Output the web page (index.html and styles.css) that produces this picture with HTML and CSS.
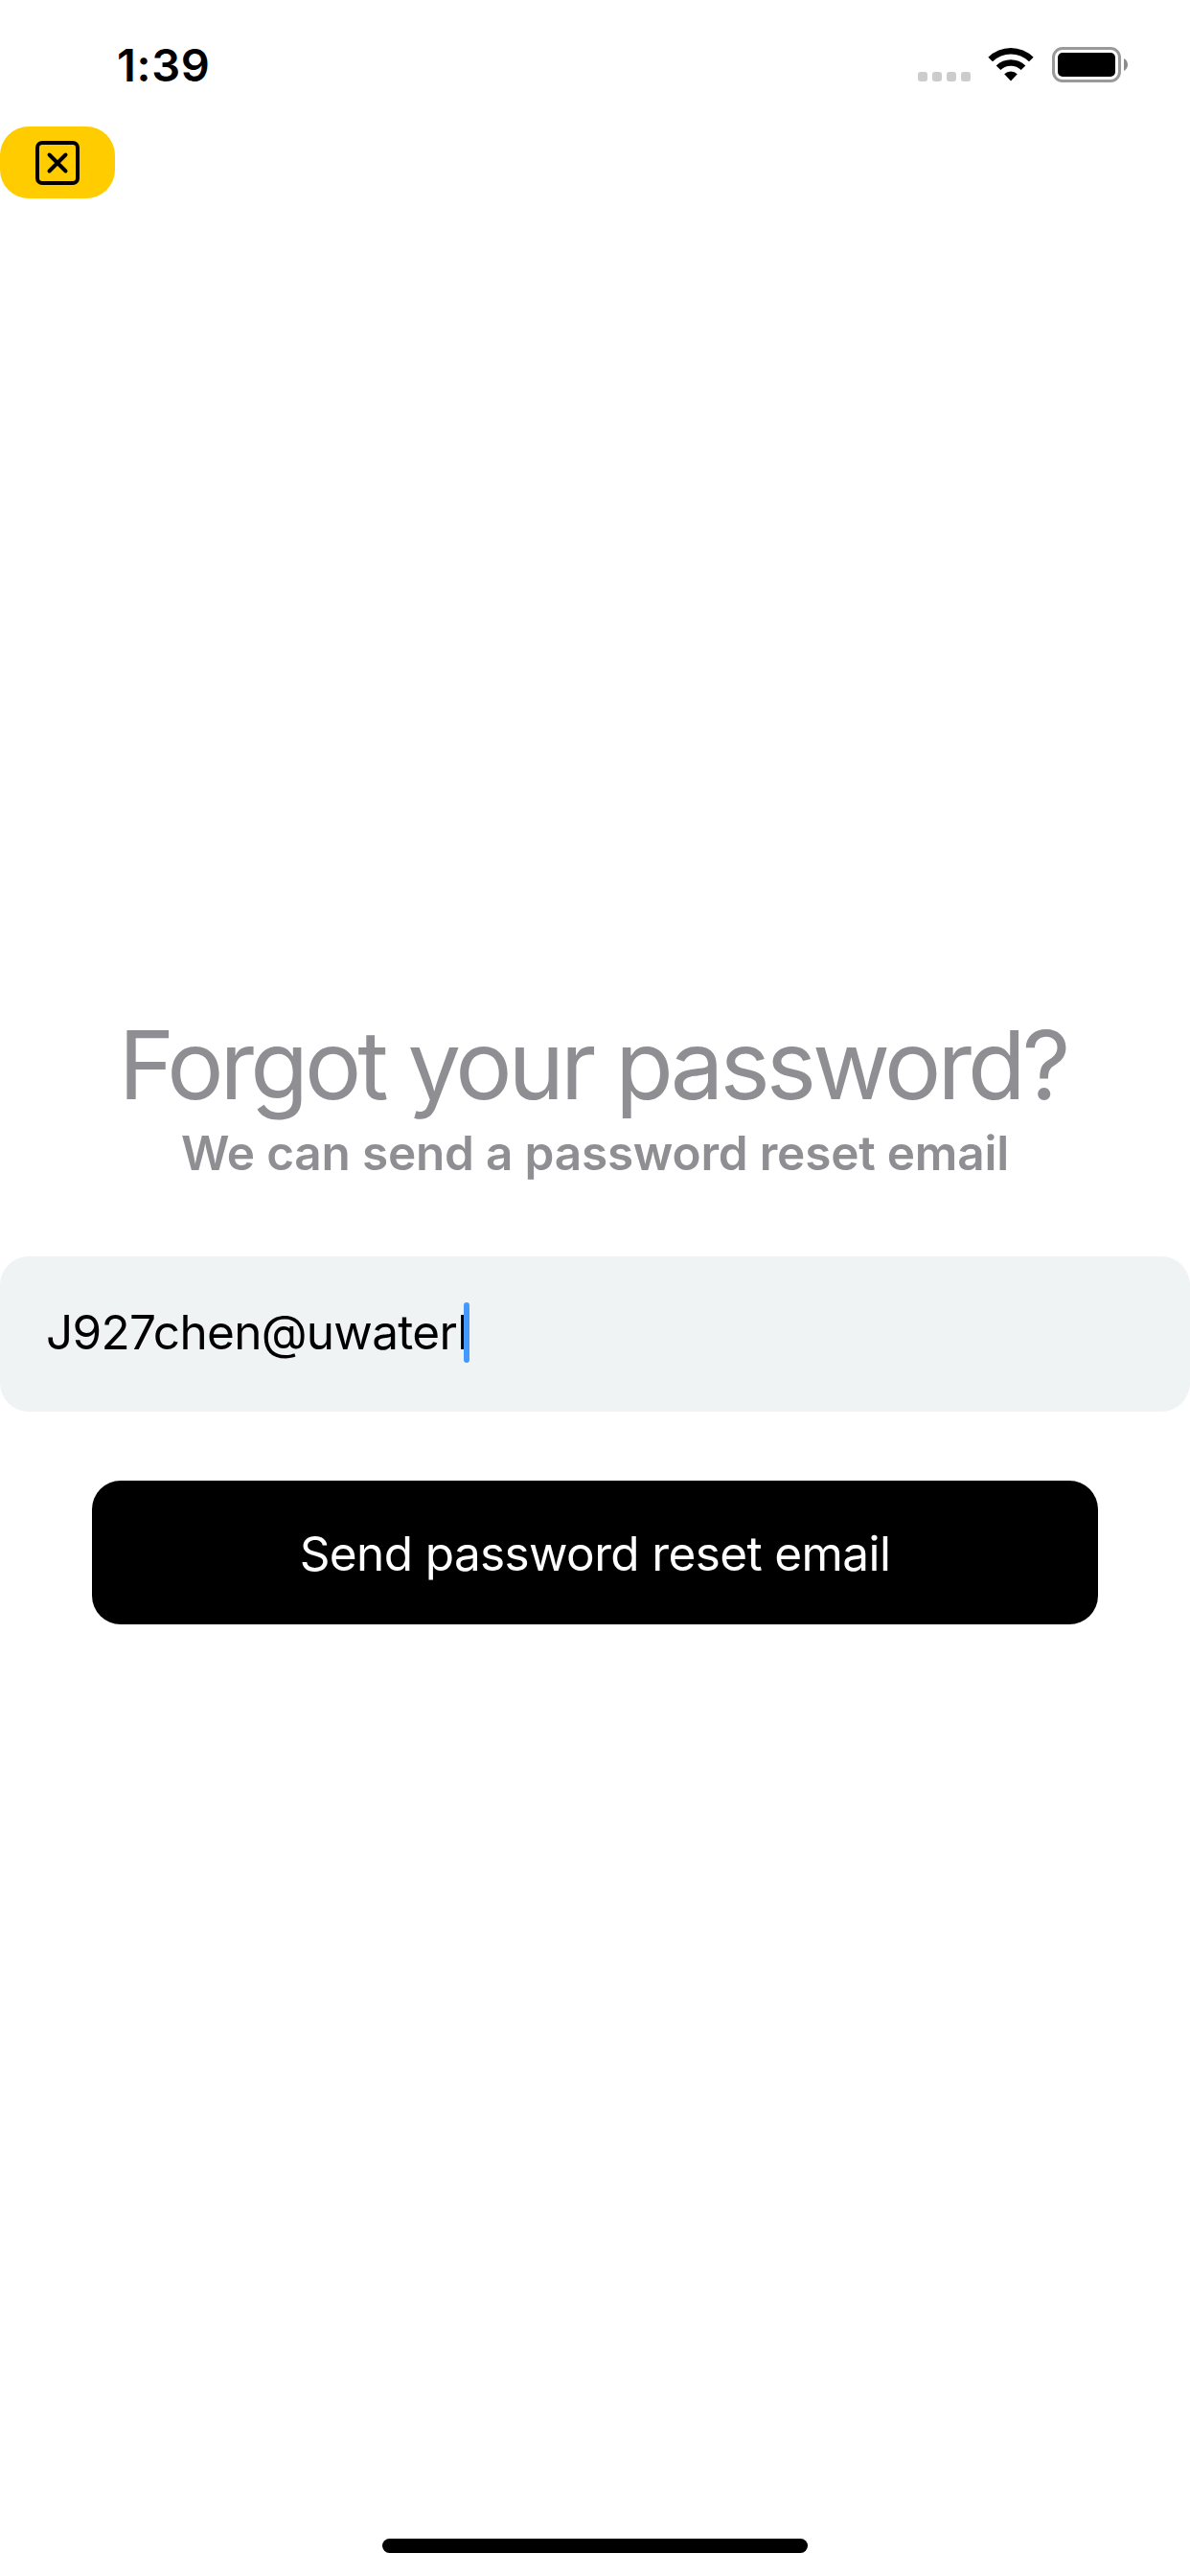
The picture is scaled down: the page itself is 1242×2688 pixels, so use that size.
FILE: index.html
```html
<!DOCTYPE html>
<html lang="en">
<head>
<meta charset="utf-8">
<title>Reset password</title>
<link rel="stylesheet" href="styles.css">
</head>
<body>
<div class="screen">
  <header class="status">
    <span class="time">1:39</span>
    <div class="indicators">
      <span class="signal"><i></i><i></i><i></i><i></i></span>
      <svg class="wifi" width="48" height="37" viewBox="0 0 48 37">
        <path d="M0.4 10.8A33.4 33.4 0 0 1 47.6 10.8L43 15.3A27 27 0 0 0 5 15.3Z"/>
        <path d="M8.7 19.4A22 22 0 0 1 39.3 19.4L34.7 24A15.5 15.5 0 0 0 13.3 24Z"/>
        <path d="M17.2 28.2A10 10 0 0 1 30.8 28.2L24 35.6Z"/>
      </svg>
      <svg class="battery" width="80" height="37" viewBox="0 0 80 37">
        <rect x="1.5" y="1.5" width="69" height="34" rx="9.5" fill="none" stroke="#999" stroke-width="3"/>
        <rect x="6" y="6" width="60" height="25" rx="5"/>
        <path d="M75 12C80.300 14.500 80.300 22.500 75 25Z" fill="#8c8c8c"/>
      </svg>
    </div>
  </header>
  <button class="close" aria-label="Close">
    <svg width="46" height="46" viewBox="0 0 46 46" fill="none" stroke="#000" stroke-width="4">
      <rect x="2" y="2" width="42" height="42" rx="5"/>
      <path d="M14.500 14.500 31.500 31.500M31.500 14.500 14.500 31.500" stroke-linecap="round"/>
    </svg>
  </button>
  <main class="content">
    <h1 class="title">Forgot your password?</h1>
    <p class="subtitle">We can send a password reset email</p>
    <div class="field"><span class="value">J927chen@uwaterl<i class="caret"></i></span></div>
    <button class="send">Send password reset email</button>
  </main>
  <div class="home"></div>
</div>
</body>
</html>
```
FILE: styles.css
```css
* { box-sizing: border-box; }
body {
  margin: 0;
  background: #fff;
  color: #000;
  font-family: Inter, "Liberation Sans", sans-serif;
}
button { border: 0; padding: 0; font: inherit; }
.screen { height: 2688px; display: flex; flex-direction: column; align-items: center; }
.status { width: 100%; height: 132px; padding: 0 64px 0 122px; display: flex; justify-content: space-between; }
.time { font-size: 47px; font-weight: 600; line-height: 60px; padding-top: 38px; letter-spacing: 0.7px; }
.indicators { display: flex; align-items: flex-start; padding-top: 49px; }
.signal { display: flex; gap: 5px; margin: 26px 18px 0 0; }
.signal i { width: 10px; height: 10px; border-radius: 3px; background: #ccc; }
.wifi { margin-right: 19px; }
.close {
  align-self: flex-start;
  width: 120px;
  height: 75px;
  display: flex;
  align-items: center;
  justify-content: center;
  border-radius: 30px;
  background: #fc0;
}
.content { width: 100%; flex: 1; padding-top: 843px; text-align: center; }
.title {
  margin: 0;
  padding-right: 5px;
  font-size: 99px;
  font-weight: 400;
  line-height: 122px;
  letter-spacing: -4px;
  color: #8e8e93;
  white-space: nowrap;
}
.subtitle {
  margin: 0;
  padding-top: 1px;
  font-size: 49.5px;
  font-weight: 600;
  line-height: 61px;
  letter-spacing: -0.2px;
  color: #8e8e93;
  white-space: nowrap;
}
.field {
  height: 162px;
  margin-top: 77px;
  padding: 0 48px 4px;
  display: flex;
  align-items: center;
  border-radius: 30px;
  background: #eff3f4;
  font-size: 49.5px;
  letter-spacing: -0.7px;
}
.value { position: relative; }
.caret { position: absolute; left: 436px; top: -1px; width: 6px; height: 63px; border-radius: 3px; background: #49f; }
.send {
  display: block;
  width: 1050px;
  height: 150px;
  margin: 72px auto 0;
  padding-top: 2px;
  border-radius: 30px;
  background: #000;
  color: #fff;
  font-size: 49.5px;
  letter-spacing: -0.62px;
}
.home { width: 444px; height: 15px; margin-bottom: 24px; border-radius: 8px; background: #000; }
```
